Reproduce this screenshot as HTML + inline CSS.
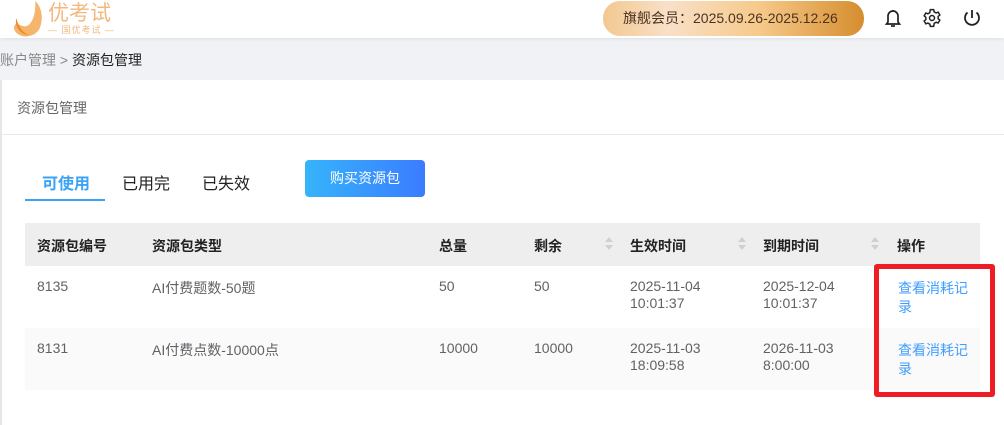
<!DOCTYPE html>
<html><head><meta charset="utf-8"><style>
*{margin:0;padding:0;box-sizing:border-box}
body{width:1004px;height:425px;overflow:hidden;background:#f0f2f5;font-family:"Liberation Sans","Noto Sans CJK SC",sans-serif;position:relative;font-size:14px}
.abs{position:absolute}
.hdr{left:0;top:0;width:1004px;height:38px;background:#fff;box-shadow:0 1px 4px rgba(0,0,0,.08)}
.card{left:2px;top:80px;width:1002px;height:345px;background:#fff}
.th{top:223px;left:25px;width:955px;height:43px;background:#eeeeee}
.t{position:absolute;font-size:14px;color:#606266;line-height:17px}
.h{position:absolute;font-size:14px;color:#222;font-weight:bold;top:236px}
.sort{position:absolute;top:237px;width:8px;height:14px}
.sort:before{content:"";position:absolute;left:0;top:0;border:4px solid transparent;border-bottom:5px solid #d0d0d0;border-top:0}
.sort:after{content:"";position:absolute;left:0;top:8px;border:4px solid transparent;border-top:5px solid #d0d0d0;border-bottom:0}
.lnk{position:absolute;font-size:14px;color:#409eff;line-height:19px;width:72px}
</style></head><body>
<div class="abs hdr"></div>
<svg class="abs" style="left:12px;top:1px" width="34" height="36" viewBox="0 0 32 34"><path d="M22 0 C28 6 30 16 26 26 C22 34 10 36 4 30 C0 26 2 20 6 22 C10 24 14 26 18 20 C22 14 22 6 22 0Z" fill="#f5b56c"/><path d="M4 16 C2 24 8 32 16 32 C10 30 6 24 4 16Z" fill="#f08c2c"/></svg>
<div class="abs" style="left:48px;top:2px;font-size:21px;color:#f3b87e;line-height:24px">优考试</div>
<div class="abs" style="left:48px;top:25px;font-size:9px;color:#f3b87e;line-height:10px;letter-spacing:1px">— 国优考试 —</div>
<div class="abs" style="left:603px;top:1px;width:261px;height:35px;border-radius:17px;background:linear-gradient(90deg,#f3c890 0%,#f8e0c8 25%,#f7c98a 60%,#d68d2e 100%)"></div>
<div class="abs" style="left:623px;top:9px;font-size:14px;color:#4a3320;line-height:18px">旗舰会员：2025.09.26-2025.12.26</div>
<svg class="abs" style="left:884px;top:8px" width="18" height="20" viewBox="0 0 18 20" fill="none" stroke="#222" stroke-width="1.7"><path d="M4 14V8a5 5 0 0 1 10 0v6l1.5 2h-13z"/><path d="M7 18h4"/><path d="M9 2v1"/></svg>
<svg class="abs" style="left:922px;top:8px" width="20" height="20" viewBox="0 0 24 24" fill="none" stroke="#222" stroke-width="1.8"><circle cx="12" cy="12" r="3"/><path d="M10 2h4l.6 2.6 2.3 1.3 2.5-.9 2 3.4-2 1.8v2.6l2 1.8-2 3.4-2.5-.9-2.3 1.3L14 22h-4l-.6-2.6-2.3-1.3-2.5.9-2-3.4 2-1.8v-2.6l-2-1.8 2-3.4 2.5.9 2.3-1.3z"/></svg>
<svg class="abs" style="left:962px;top:8px" width="20" height="20" viewBox="0 0 20 20" fill="none" stroke="#222" stroke-width="1.8"><path d="M10 2v8"/><path d="M5.5 4.5a7 7 0 1 0 9 0"/></svg>
<div class="abs" style="left:0;top:51px;font-size:14px;color:#888;line-height:18px">账户管理 &gt; <span style="color:#222">资源包管理</span></div>
<div class="abs card"></div>
<div class="abs" style="left:0;top:80px;width:2px;height:345px;background:#e6e6e6"></div>
<div class="abs" style="left:17px;top:100px;font-size:14px;color:#666;line-height:17px">资源包管理</div>
<div class="abs" style="left:2px;top:134px;width:1002px;height:1px;background:#e8e8e8"></div>
<div class="abs" style="left:42px;top:170px;font-size:16px;color:#3aa3f5;font-weight:bold">可使用</div>
<div class="abs" style="left:122px;top:170px;font-size:16px;color:#222">已用完</div>
<div class="abs" style="left:202px;top:170px;font-size:16px;color:#222">已失效</div>
<div class="abs" style="left:25px;top:199px;width:80px;height:2px;background:#3aa3f5"></div>
<div class="abs" style="left:305px;top:160px;width:120px;height:37px;border-radius:4px;background:linear-gradient(90deg,#36b4fb,#3a7cff);color:#fff;font-size:14px;text-align:center;line-height:36px">购买资源包</div>
<div class="abs th"></div>
<div class="abs" style="left:25px;top:328px;width:955px;height:62px;background:#fafafa"></div>
<div class="h" style="left:37px">资源包编号</div>
<div class="h" style="left:152px">资源包类型</div>
<div class="h" style="left:439px">总量</div>
<div class="h" style="left:534px">剩余</div>
<div class="h" style="left:630px">生效时间</div>
<div class="h" style="left:763px">到期时间</div>
<div class="h" style="left:897px">操作</div>
<div class="sort" style="left:605px"></div>
<div class="sort" style="left:738px"></div>
<div class="sort" style="left:871px"></div>
<div class="t" style="left:37px;top:278px">8135</div>
<div class="t" style="left:152px;top:280px">AI付费题数-50题</div>
<div class="t" style="left:439px;top:278px">50</div>
<div class="t" style="left:534px;top:278px">50</div>
<div class="t" style="left:630px;top:278px">2025-11-04<br>10:01:37</div>
<div class="t" style="left:763px;top:278px">2025-12-04<br>10:01:37</div>
<div class="lnk" style="left:898px;top:279px">查看消耗记录</div>
<div class="t" style="left:37px;top:340px">8131</div>
<div class="t" style="left:152px;top:342px">AI付费点数-10000点</div>
<div class="t" style="left:439px;top:340px">10000</div>
<div class="t" style="left:534px;top:340px">10000</div>
<div class="t" style="left:630px;top:340px">2025-11-03<br>18:09:58</div>
<div class="t" style="left:763px;top:340px">2026-11-03<br>8:00:00</div>
<div class="lnk" style="left:898px;top:341px">查看消耗记录</div>
<div class="abs" style="left:874px;top:264px;width:121px;height:133px;border:5px solid #ee1c25;border-radius:3px"></div>
</body></html>
